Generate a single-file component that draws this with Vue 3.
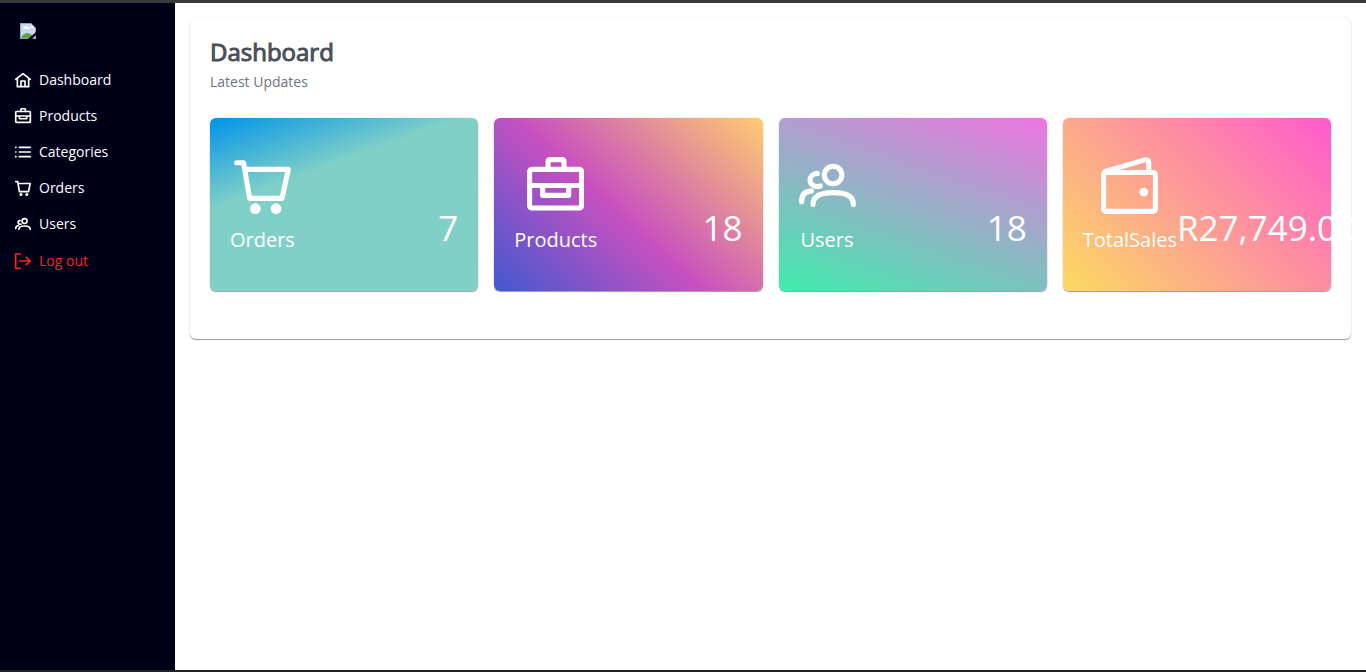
<script setup>
const links = [
  { label: 'Dashboard', icon: 'home' },
  { label: 'Products', icon: 'case' },
  { label: 'Categories', icon: 'list' },
  { label: 'Orders', icon: 'cart' },
  { label: 'Users', icon: 'users' },
  { label: 'Log out', icon: 'exit' },
]
const cards = [
  { label: 'Orders', icon: 'cart', value: '7' },
  { label: 'Products', icon: 'case', value: '18' },
  { label: 'Users', icon: 'users', value: '18' },
  { label: 'TotalSales', icon: 'wallet', value: 'R27,749.00' },
]
const icons = {
  home: '<path d="M7 19v25h34V19"/><path d="M2 22 24 5l22 17M18 43V27h12v16"/>',
  case: '<rect x="2.2" y="10.4" width="43.8" height="32.6" rx="2"/><path d="M17.7 10.4V4.2q0-2 2-2h9.5q2 0 2 2v6.2M2.2 24H46M13.2 24v8.3h21.9V24"/>',
  list: '<path d="M13 10h33M13 24h33M13 38h33"/><path d="M2 10h1M2 24h1M2 38h1"/>',
  cart: '<path d="M2.2 4.8H8l5.2 30h27.3l5.2-24.4H10"/><g fill="currentColor" stroke="none"><circle cx="18" cy="43.5" r="4.5"/><circle cx="35.4" cy="43.5" r="4.5"/></g>',
  users: '<circle cx="28.7" cy="15.2" r="7.4"/><path d="M11.8 39.9c0-7 6-9.9 17-9.9s17 2.9 17 9.9M15.5 13.8c-3.5 0-6.2 2.5-6.2 5.7 0 4 4.2 6.2 8.7 4.9M2.2 37.7c0-6 2.5-9 8.3-9"/>',
  exit: '<path d="M16 3H2v43h14M14 24h31M34 13l12 11-12 11"/>',
  wallet: '<rect x="2.2" y="13" width="43.6" height="32.8" rx="2"/><path d="M3.4 12.2 37 2.4q3.2-.6 3.2 2.2V13"/><circle cx="36" cy="29.5" r="3.7" fill="currentColor" stroke="none"/>',
}
</script>

<template>
  <div class="page">
    <aside class="sidebar">
      <a class="logo" href="#" aria-label="Home">
        <svg width="16" height="16" viewBox="0 0 16 16">
          <path d="M0 0h11l5 5v11H0z" fill="#a3a3a8" />
          <path d="M1 1h10v4h4v10H1z" fill="#c8d9f5" />
          <path d="M3 6q0-2 2-2 1-2 3 0 2 0 2 2z" fill="#fff" />
          <path d="M11 1v4h4z" fill="#f4f4f4" />
          <path d="M1 15q2-5 7-5 4 1 6 5z" fill="#56aa3c" />
          <path d="m8 16 8-7v3l-4 4z" fill="#000018" />
        </svg>
      </a>
      <nav>
        <a v-for="l in links" :key="l.label" href="#" :class="['link', l.icon]">
          <svg viewBox="0 0 48 48" v-html="icons[l.icon]" />
          <span>{{ l.label }}</span>
        </a>
      </nav>
    </aside>
    <main>
      <section class="panel">
        <h1>Dashboard</h1>
        <p>Latest Updates</p>
        <div class="cards">
          <article v-for="c in cards" :key="c.label" :class="['card', c.icon]">
            <div class="kind">
              <svg viewBox="0 0 48 48" v-html="icons[c.icon]" />
              <h2>{{ c.label }}</h2>
            </div>
            <span class="value">{{ c.value }}</span>
          </article>
        </div>
      </section>
    </main>
  </div>
</template>

<style>
body { margin: 0; }
</style>

<style scoped>
* { box-sizing: border-box; }
.page {
  display: flex;
  min-height: 100vh;
  border-top: 3px solid #39393d;
  border-bottom: 2px solid #202124;
  background: #fff;
  font-family: "Open Sans", sans-serif;
  overflow: hidden;
}
.sidebar { flex: 0 0 175px; background: #000018; }
.logo { display: block; height: 16px; margin: 20px 20px 23px; }
.logo svg { display: block; }
.link {
  display: flex;
  align-items: center;
  gap: 8px;
  height: 36px;
  padding-left: 15px;
  color: #fff;
  font-size: 14px;
  line-height: 20px;
  text-decoration: none;
}
.link svg { width: 16px; height: 16px; overflow: visible; }
.link.exit { color: #f22; height: 38px; }
svg { fill: none; stroke: currentColor; stroke-width: 4.3; stroke-linecap: round; stroke-linejoin: round; }
.logo svg { stroke: none; }
.link svg { stroke-width: 5; }
main { flex: 1; min-width: 0; padding: 15px; }
.panel {
  padding: 20px 20px 48px;
  border-radius: 6px;
  box-shadow: 0 1px 1px #999, 0 0 2px #e4e4e4;
}
h1 {
  margin: 0;
  color: #495057;
  font-weight: 400;
  font-size: 24px;
  line-height: 28px;
  -webkit-text-stroke: 1px #495057;
}
p { margin: 6px 0 26px; color: #6c757d; font-size: 14px; line-height: 20px; }
.cards { display: grid; grid-template-columns: repeat(4, minmax(0, 1fr)); gap: 16px; }
.card {
  display: flex;
  align-items: flex-start;
  justify-content: space-between;
  padding: 39px 20px 37px;
  border-radius: 6px;
  color: #fff;
  box-shadow: 0 1px 1px #999, 0 0 2px #ddd;
}
.card.cart { background: linear-gradient(160deg, #0093e9, #80d0c7 34%); }
.card.case { background: linear-gradient(43deg, #4158d0, #c850c0 46%, #ffcc70); }
.card.users { background: linear-gradient(19deg, #3eecac, #ee74e1); }
.card.wallet { background: linear-gradient(45deg, #fbda61, #ff5acd); }
.kind { display: flex; flex-direction: column; align-items: center; }
.kind svg { width: 57px; height: 57px; }
h2 { margin: 12px 0 0; font-weight: 400; font-size: 20px; line-height: 28px; }
.value { margin-top: 47px; font-size: 35px; line-height: 48px; }
</style>
